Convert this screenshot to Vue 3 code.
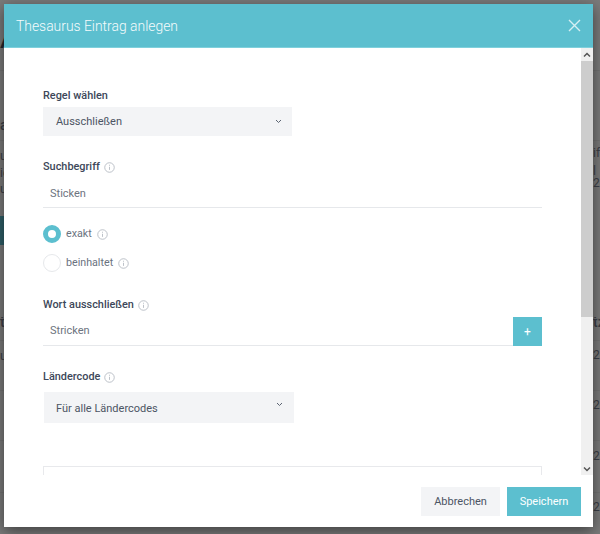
<script setup>
const rows = [
  { t: 'A', x: 0, y: 28, c: 'bd-big' },
  { t: 'a', x: 0, y: 118, c: 'bd-mid' },
  { t: 'u', x: 0, y: 150, c: 'bd-sm' },
  { t: 'ic', x: 0, y: 167, c: 'bd-sm' },
  { t: 'u', x: 0, y: 183, c: 'bd-sm' },
  { t: 'if', x: 593, y: 147, c: 'bd-sm' },
  { t: 'l 2', x: 593, y: 165, c: 'bd-sm' },
  { t: 'tz', x: 593, y: 315, c: 'bd-mid' },
  { t: '2.', x: 593, y: 349, c: 'bd-sm' },
  { t: '2.', x: 593, y: 399, c: 'bd-sm' },
  { t: '2.', x: 593, y: 450, c: 'bd-sm' },
  { t: '2.', x: 593, y: 501, c: 'bd-sm' },
  { t: 't', x: 0, y: 315, c: 'bd-mid' },
  { t: 'u', x: 0, y: 350, c: 'bd-sm' },
]
const lines = [70, 140, 318, 340, 390, 440, 492]
</script>

<template>
  <div class="page">
    <div class="backdrop">
      <span v-for="(r, i) in rows" :key="i" class="bd" :class="r.c" :style="{ left: r.x + 'px', top: r.y + 'px' }">{{ r.t }}</span>
      <i v-for="y in lines" :key="y" class="bd-line" :style="{ top: y + 'px' }"></i>
      <i class="bd-teal"></i>
    </div>

    <div class="modal">
      <header class="head">
        <h1 class="title">Thesaurus Eintrag anlegen</h1>
        <svg class="close" width="13" height="13" viewBox="0 0 13 13" aria-label="Schließen">
          <path d="M1 1l11 11M12 1L1 12" fill="none" stroke="#d6eff3" stroke-width="1.4" />
        </svg>
      </header>

      <div class="body">
        <div class="scroll">
          <form class="form">
            <div class="label first">Regel wählen</div>
            <div class="select s-regel">
              <span>Ausschließen</span>
              <svg class="chev" width="7" height="5" viewBox="0 0 7 5"><path d="M1 1l2.5 2.5L6 1" fill="none" stroke="#5b6472" stroke-width="1" /></svg>
            </div>

            <div class="label l-such">Suchbegriff
              <svg class="info" width="11" height="11" viewBox="0 0 12 12"><circle cx="6" cy="6" r="5.2" /><path d="M6 5.2v3.4M6 3v1.1" /></svg>
            </div>
            <div class="input i-such"><span>Sticken</span></div>

            <div class="radio r-one">
              <span class="dot on"></span>
              <span class="rtext">exakt</span>
              <svg class="info" width="11" height="11" viewBox="0 0 12 12"><circle cx="6" cy="6" r="5.2" /><path d="M6 5.2v3.4M6 3v1.1" /></svg>
            </div>
            <div class="radio r-two">
              <span class="dot"></span>
              <span class="rtext">beinhaltet</span>
              <svg class="info" width="11" height="11" viewBox="0 0 12 12"><circle cx="6" cy="6" r="5.2" /><path d="M6 5.2v3.4M6 3v1.1" /></svg>
            </div>

            <div class="label l-wort">Wort ausschließen
              <svg class="info" width="11" height="11" viewBox="0 0 12 12"><circle cx="6" cy="6" r="5.2" /><path d="M6 5.2v3.4M6 3v1.1" /></svg>
            </div>
            <div class="input-row">
              <div class="input grow i-wort"><span>Stricken</span></div>
              <button type="button" class="plus">+</button>
            </div>

            <div class="label l-land">Ländercode
              <svg class="info" width="11" height="11" viewBox="0 0 12 12"><circle cx="6" cy="6" r="5.2" /><path d="M6 5.2v3.4M6 3v1.1" /></svg>
            </div>
            <div class="select wide">
              <span>Für alle Ländercodes</span>
              <svg class="chev up" width="7" height="5" viewBox="0 0 7 5"><path d="M1 1l2.5 2.5L6 1" fill="none" stroke="#5b6472" stroke-width="1" /></svg>
            </div>

            <div class="box"></div>
          </form>
        </div>

        <div class="bar">
          <div class="arrow">
            <svg width="8" height="6" viewBox="0 0 8 6"><path d="M1 4.5l3-3 3 3" fill="none" stroke="#555" stroke-width="1.5" /></svg>
          </div>
          <div class="track"><div class="thumb"></div></div>
          <div class="arrow">
            <svg width="8" height="6" viewBox="0 0 8 6"><path d="M1 1.5l3 3 3-3" fill="none" stroke="#555" stroke-width="1.5" /></svg>
          </div>
        </div>
      </div>

      <footer class="foot">
        <button type="button" class="btn grey">Abbrechen</button>
        <button type="button" class="btn teal">Speichern</button>
      </footer>
    </div>
  </div>
</template>

<style>
html, body { margin: 0; padding: 0; }
</style>

<style scoped>
.page {
  position: relative;
  width: 600px;
  height: 534px;
  overflow: hidden;
  background: #7b7b7b;
  font-family: Roboto, "Liberation Sans", sans-serif;
}
.backdrop { position: absolute; inset: 0; }
.bd { position: absolute; color: #3c3f47; line-height: 1; }
.bd-big { font-size: 24px; font-weight: 500; color: #26282e; }
.bd-mid { font-size: 14px; font-weight: 500; }
.bd-sm { font-size: 12px; }
.bd-line { position: absolute; left: 0; right: 0; height: 1px; background: #747474; }
.bd-teal { position: absolute; left: 0; top: 216px; width: 4px; height: 29px; background: #2f5f68; }

.modal {
  position: absolute;
  left: 4px;
  top: 4px;
  width: 589px;
  height: 523px;
  display: flex;
  flex-direction: column;
  background: #fff;
  box-shadow: 0 4px 14px rgba(0, 0, 0, 0.5);
}
.head {
  flex: none;
  box-sizing: border-box;
  height: 44px;
  display: flex;
  align-items: center;
  justify-content: space-between;
  padding: 0 12px;
  background: #5cbfcf;
  border-bottom: 1px solid #7fd0dc;
}
.title {
  margin: 0;
  font-size: 13.9px;
  font-weight: 300;
  color: #f4fbfc;
}
.close { display: block; }

.body { flex: none; height: 427px; display: flex; overflow: hidden; }
.scroll { flex: 1; overflow: hidden; }
.form { padding: 0 39px; display: flex; flex-direction: column; align-items: stretch; }

.label {
  display: flex;
  align-items: center;
  gap: 4px;
  font-size: 10.9px;
  font-weight: 500;
  line-height: 14px;
  color: #3d4759;
}
.first { margin-top: 41px; }
.l-such { margin-top: 24px; }
.l-wort { margin-top: 26px; }
.l-land { margin-top: 24px; }

.select {
  box-sizing: border-box;
  width: 249px;
  height: 29px;
  margin-top: 5px;
  padding: 0 10px 0 13px;
  display: flex;
  align-items: center;
  justify-content: space-between;
  background: #f3f4f6;
  font-size: 11px;
  color: #4c5564;
}
.s-regel { margin-top: 4px; }
.select.wide { width: 250px; height: 31px; margin-top: 8px; margin-left: 1px; padding: 2px 11px 0 12px; }
.chev.up { margin-top: -8px; }

.input {
  box-sizing: border-box;
  height: 29px;
  padding: 0 7px;
  display: flex;
  align-items: center;
  border-bottom: 1px solid #e6e8eb;
  font-size: 11px;
  color: #6d7480;
}
.i-such { margin-top: 5px; }
.i-wort { padding-bottom: 2px; }
.input-row { display: flex; margin-top: 5px; }
.grow { flex: 1; }
.plus {
  width: 29px;
  height: 29px;
  padding: 0;
  border: 0;
  background: #5cbfcf;
  color: #fff;
  font: 400 12px Roboto, sans-serif;
  cursor: pointer;
}

.radio {
  display: flex;
  align-items: center;
  font-size: 10.7px;
  color: #6a7280;
  height: 18px;
  gap: 5px;
}
.rtext { margin-bottom: 2px; }
.r-one { margin-top: 17px; }
.r-two { margin-top: 11px; }
.dot {
  box-sizing: border-box;
  width: 18px;
  height: 18px;
  border-radius: 50%;
  border: 1px solid #e6e8eb;
  background: #fff;
}
.dot.on { border: 5px solid #5cbfcf; }
.info { display: block; flex: none; fill: none; stroke: #b7bcc4; stroke-width: 1; }

.box {
  box-sizing: border-box;
  height: 60px;
  margin-top: 43px;
  border: 1px solid #e8e9ec;
  flex: none;
}

.bar { flex: none; width: 12px; display: flex; flex-direction: column; background: #f0f0f0; }
.arrow { flex: none; height: 13px; display: flex; align-items: center; justify-content: center; }
.track { flex: 1; }
.thumb { height: 256px; background: #cdcdcd; }

.foot {
  flex: 1;
  display: flex;
  justify-content: flex-end;
  gap: 7px;
  padding: 12px 12px 0 0;
}
.btn {
  height: 29px;
  padding: 0;
  border: 0;
  font: 400 11px Roboto, sans-serif;
  cursor: pointer;
}
.grey { width: 79px; background: #f3f4f6; color: #4c5564; }
.teal { width: 74px; background: #5cbfcf; color: #fff; }
</style>
